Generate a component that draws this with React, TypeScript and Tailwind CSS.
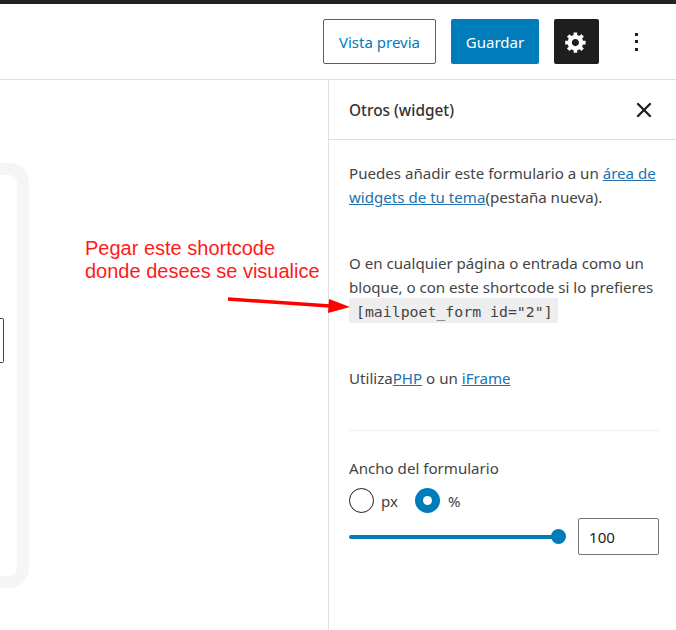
import { X } from "lucide-react";

const uiFont = "font-['Noto_Sans',sans-serif]";

function GearIcon() {
  return (
    <svg viewBox="0 0 20 20" className="-ml-[1px] h-6 w-6" fill="#fff">
      <path d="M18 12h-2.18c-.17.7-.44 1.35-.81 1.93l1.54 1.54-2.1 2.1-1.54-1.54c-.58.36-1.23.63-1.91.79V19H8v-2.18c-.68-.16-1.33-.43-1.91-.79l-1.54 1.54-2.12-2.12 1.54-1.54c-.36-.58-.63-1.23-.79-1.91H1V9.03h2.17c.16-.7.44-1.35.8-1.94L2.43 5.55l2.1-2.1 1.54 1.54c.58-.37 1.24-.64 1.93-.81V2h3v2.18c.68.16 1.33.43 1.91.79l1.54-1.54 2.12 2.12-1.54 1.54c.36.59.64 1.24.8 1.94H18V12zm-8.5 1.5c1.66 0 3-1.34 3-3s-1.34-3-3-3-3 1.34-3 3 1.34 3 3 3z" />
    </svg>
  );
}

function Header() {
  return (
    <header className="flex h-[76px] items-center justify-end border-b border-[#e0e0e0] pr-[37px]">
      <button className="h-[45px] w-[113px] rounded-[2px] border border-[#007cba] pt-[2px] text-[15px] text-[#007cba]">
        Vista previa
      </button>
      <button className="ml-[15px] h-[45px] w-[88px] rounded-[2px] bg-[#007cba] pt-[2px] text-[15px] text-white">
        Guardar
      </button>
      <button className="ml-[15px] flex h-[45px] w-[45px] items-center justify-center rounded-[2px] bg-[#1e1e1e]">
        <GearIcon />
      </button>
      <div className="ml-[36px] flex w-[4px] flex-col gap-[4.5px]">
        <span className="h-[3px] w-[3px] bg-[#1e1e1e]" />
        <span className="h-[3px] w-[3px] bg-[#1e1e1e]" />
        <span className="h-[3px] w-[3px] bg-[#1e1e1e]" />
      </div>
    </header>
  );
}

function Canvas() {
  return (
    <main className="relative flex-1">
      <div className="mt-[83px] h-[425px] w-[29px] rounded-r-[20px] border-y-[12px] border-r-[12px] border-[#f5f5f5]">
        <div className="mt-[143px] h-[45px] w-[4px] rounded-r-[2px] border-y border-r border-[#444]" />
      </div>
      <p className="absolute left-[85px] top-[157px] font-['Liberation_Sans',sans-serif] text-[20px] leading-[23px] text-[#ff1a1a]">
        Pegar este shortcode
        <br />
        donde desees se visualice
      </p>
      <svg className="absolute left-[226px] top-[215px] overflow-visible" width="126" height="20" viewBox="0 0 126 20">
        <path d="M2 4 L104 11" stroke="#ff0000" strokeWidth="3.5" />
        <path d="M103 4 L124 12 L102 18 Z" fill="#ff0000" />
      </svg>
    </main>
  );
}

function Sidebar() {
  return (
    <aside className="h-full w-[348px] border-l border-[#e0e0e0] text-[15.1px] text-[#444]">
      <div className="flex h-[60px] items-center justify-between border-b border-[#e0e0e0] pl-[20px] pr-[20px]">
        <h2 className="pt-[3px] text-[15.4px] font-medium text-[#333]">Otros (widget)</h2>
        <X size={24} strokeWidth={2.3} className="text-[#1e1e1e]" />
      </div>
      <div className="pl-[20px] pr-[17px] pt-[21px]">
        <p className="leading-[24px]">
          Puedes añadir este formulario a un{" "}
          <a className="text-[#2271b1] underline">área de widgets de tu tema</a>(pestaña nueva).
        </p>
        <p className="mt-[42px] leading-[24px]">
          O en cualquier página o entrada como un bloque, o con este shortcode si lo prefieres
        </p>
        <code className="-mt-[1px] block h-[25px] w-[209px] bg-[#eeeeee] pl-[7px] font-['DejaVu_Sans_Mono',monospace] text-[14.85px] leading-[28px]">
          [mailpoet_form id="2"]
        </code>
        <p className="mt-[43px] leading-[24px]">
          Utiliza<a className="text-[#2271b1] underline">PHP</a> o un{" "}
          <a className="text-[#2271b1] underline">iFrame</a>
        </p>
        <hr className="mt-[40px] border-[#f0f0f0]" />
        <div className="mt-[25px] leading-[24px]">Ancho del formulario</div>
        <div className="mt-[8px] flex h-[25px] items-center">
          <span className="h-[25px] w-[25px] rounded-full border border-[#1e1e1e]" />
          <span className="ml-[7px] pt-[2px]">px</span>
          <span className="ml-[17px] flex h-[25px] w-[25px] items-center justify-center rounded-full bg-[#007cba]">
            <span className="h-[9px] w-[9px] rounded-full bg-white" />
          </span>
          <span className="ml-[8px] pt-[2px]">%</span>
        </div>
        <div className="mt-[5px] flex items-center">
          <div className="flex w-[217px] items-center">
            <div className="h-[4px] flex-1 rounded-l-full bg-[#007cba]" />
            <span className="-ml-[1px] h-[15px] w-[15px] rounded-full bg-[#007cba]" />
          </div>
          <div className="ml-[12px] flex h-[37px] w-[81px] items-center rounded-[2px] border border-[#757575] pl-[10px] pt-[2px] text-[#1e1e1e]">
            100
          </div>
        </div>
      </div>
    </aside>
  );
}

export default function App() {
  return (
    <div className={`flex h-[630px] w-[676px] flex-col overflow-hidden bg-white ${uiFont}`}>
      <div className="h-[4px] bg-[#1d2327]" />
      <Header />
      <div className="flex flex-1">
        <Canvas />
        <Sidebar />
      </div>
    </div>
  );
}
